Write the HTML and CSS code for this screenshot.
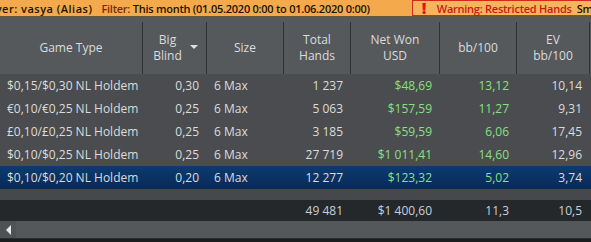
FILE: index.html
```html
<!DOCTYPE html>
<html lang="en">
<head>
    <meta charset="UTF-8">
    <title>Results</title>
    <link rel="stylesheet" href="styles.css">
</head>
<body>
    <div class="topbar">
        <span class="player">Player: vasya (Alias)</span>
        <span class="filter"><span class="label">Filter:</span> This month (01.05.2020 0:00 to 01.06.2020 0:00)</span>
        <span class="warning"><span class="bang">!</span><span class="warn-text">Warning: Restricted Hands</span> Small</span>
    </div>
    <div class="grid">
        <div class="head">
            <div class="hc"><span>Game Type</span></div>
            <div class="hc sort"><span>Big<br>Blind</span><i class="arrow"></i></div>
            <div class="hc"><span>Size</span></div>
            <div class="hc"><span>Total<br>Hands</span></div>
            <div class="hc"><span>Net Won<br>USD</span></div>
            <div class="hc"><span>bb/100</span></div>
            <div class="hc"><span>EV<br>bb/100</span></div>
        </div>
        <div class="row">
            <div>$0,15/$0,30 NL Holdem</div><div class="r">0,30</div><div>6 Max</div><div class="r">1 237</div><div class="r g">$48,69</div><div class="r g">13,12</div><div class="r">10,14</div>
        </div>
        <div class="row">
            <div>€0,10/€0,25 NL Holdem</div><div class="r">0,25</div><div>6 Max</div><div class="r">5 063</div><div class="r g">$157,59</div><div class="r g">11,27</div><div class="r">9,31</div>
        </div>
        <div class="row">
            <div>£0,10/£0,25 NL Holdem</div><div class="r">0,25</div><div>6 Max</div><div class="r">3 185</div><div class="r g">$59,59</div><div class="r g">6,06</div><div class="r">17,45</div>
        </div>
        <div class="row">
            <div>$0,10/$0,25 NL Holdem</div><div class="r">0,25</div><div>6 Max</div><div class="r">27 719</div><div class="r g">$1 011,41</div><div class="r g">14,60</div><div class="r">12,96</div>
        </div>
        <div class="row selected">
            <div>$0,10/$0,20 NL Holdem</div><div class="r">0,20</div><div>6 Max</div><div class="r">12 277</div><div class="r g">$123,32</div><div class="r g">5,02</div><div class="r">3,74</div>
        </div>
        <div class="spacer"></div>
        <div class="row total">
            <div></div><div></div><div></div><div class="r">49 481</div><div class="r">$1 400,60</div><div class="r">11,3</div><div class="r">10,5</div>
        </div>
        <div class="scrollbar">
            <div class="btn"><i class="left"></i></div>
            <div class="track"></div>
        </div>
    </div>
</body>
</html>
```

FILE: styles.css
```css
body {
    margin: 0;
    font-family: 'Open Sans', 'Noto Sans', sans-serif;
    font-size: 12px;
    background: #1b1c1e;
    width: 591px;
    height: 242px;
    overflow: hidden;
}
.topbar {
    height: 16px;
    background: #f4aa4c;
    display: flex;
    align-items: center;
    white-space: nowrap;
    overflow: hidden;
    color: #1b1200;
    font-weight: 600;
    font-size: 11px;
    letter-spacing: -0.25px;
    border-bottom: 1px solid #6b5431;
}
.player {
    margin-left: -22px;
    letter-spacing: 0.5px;
}
.filter {
    margin-left: 9px;
}
.filter .label {
    color: #7a2a06;
}
.warning {
    margin-left: 42px;
    height: 16px;
    box-sizing: border-box;
    border: 1px solid #d42a1c;
    border-right: none;
    background: #f6b55c;
    display: flex;
    align-items: center;
    padding-left: 9px;
    flex: 1;
    gap: 5px;
}
.bang {
    color: #e0141a;
    font-weight: 800;
    font-size: 16px;
    width: 10px;
}
.warn-text {
    color: #d0141a;
}
.grid {
    color: #dcdcdc;
}
.head, .row {
    display: grid;
    grid-template-columns: 143px 64px 77px 67px 89px 77px 73px;
}
.head {
    height: 57px;
    background: #56595c;
    color: #d9dcdf;
}
.hc {
    margin-top: 5px;
    border-right: 1px solid #2f3134;
    display: flex;
    align-items: center;
    justify-content: center;
    text-align: center;
    line-height: 16px;
    position: relative;
}
.hc.sort span {
    margin-right: 14px;
}
.arrow {
    position: absolute;
    right: 8px;
    top: 23px;
    border-left: 4px solid transparent;
    border-right: 4px solid transparent;
    border-top: 4px solid #e0e0e0;
}
.row {
    height: 23px;
    line-height: 23px;
    background: #4a4c4f;
    white-space: nowrap;
}
.row div {
    padding: 0 8px 0 7px;
    overflow: hidden;
}
.row .r {
    text-align: right;
}
.g {
    color: #88e080;
}
.row.selected {
    background: linear-gradient(#0d3b70, #072a58);
}
.spacer {
    height: 11px;
    background: #46484b;
}
.row.total {
    height: 21px;
    line-height: 21px;
    background: #25282b;
    color: #c5d0dc;
}
.scrollbar {
    height: 17px;
    display: flex;
    background: #55585b;
    border-bottom: 1px solid #2a2c2e;
}
.btn {
    width: 16px;
    display: flex;
    align-items: center;
    justify-content: center;
    background: #4f5255;
}
.left {
    border-top: 5px solid transparent;
    border-bottom: 5px solid transparent;
    border-right: 5px solid #e6e6e6;
}
.track {
    flex: 1;
}
```
